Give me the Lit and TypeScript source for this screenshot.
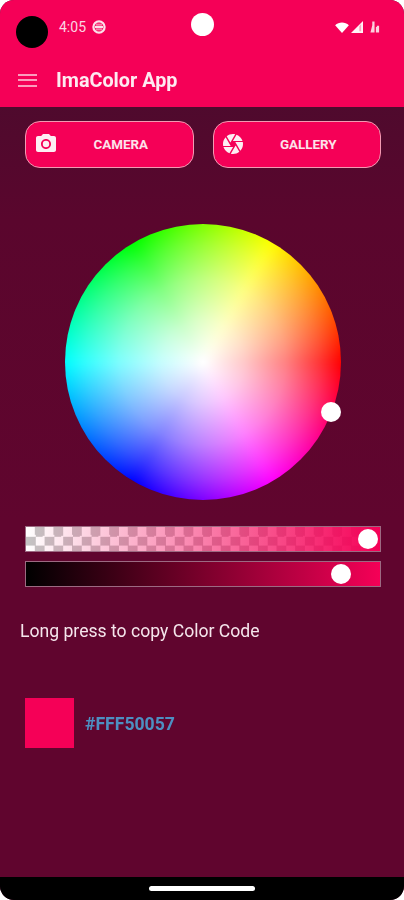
import { LitElement, html, css } from "lit";
import { customElement } from "lit/decorators.js";

@customElement("app-root")
export class AppRoot extends LitElement {
  static styles = css`
    :host { display: block; width: 404px; height: 900px; background: #fff; font-family: Roboto, "Liberation Sans", sans-serif; }
    .screen { position: relative; width: 404px; height: 900px; clip-path: inset(0 round 14px); display: flex; flex-direction: column; background: linear-gradient(#4f0a2d 107px, #5a062d 220px, #60052e 520px); }
    .content { display: flex; flex-direction: column; flex: 1; filter: blur(0.5px); }
    header { height: 107px; background: #f50057; display: flex; flex-direction: column; flex: none; }
    .status { height: 54px; display: flex; align-items: center; padding: 0 24px 0 59px; color: #fbd5e2; font-size: 14px; }
    .status .time { margin-right: 6px; }
    .status .right { margin-left: auto; display: flex; align-items: center; }
    .status .signal { margin: 0 7px 0 2px; }
    .cam { position: absolute; left: 16px; top: 16px; width: 32px; height: 32px; border-radius: 50%; background: #000; }
    .dot { position: absolute; left: 191px; top: 13px; width: 23px; height: 23px; border-radius: 50%; background: #fff; }
    .toolbar { height: 44px; margin-top: 4px; display: flex; align-items: center; padding-left: 18px; color: #fff; }
    .burger { width: 19px; display: flex; flex-direction: column; gap: 3.5px; margin-right: 19px; }
    .burger i { display: block; height: 2px; background: #fb9dbd; }
    .title { font-size: 19.8px; font-weight: 700; color: #fdeaf1; }
    .buttons { display: flex; gap: 19px; padding: 14px 23px 0 25px; }
    .btn { flex: 1; height: 47px; box-sizing: border-box; border: 1.5px solid #f29ab2; border-radius: 15px; background: #f50057; display: flex; align-items: center; position: relative; font-size: 13.4px; font-weight: 700; }
    .btn svg { position: absolute; left: 7.5px; top: 9.5px; }
    .btn span { flex: 1; text-align: center; color: #fde3ea; padding-left: 23px; }
    .wheelwrap { display: flex; justify-content: center; margin-top: 56px; padding-left: 2px; }
    .wheel { position: relative; width: 276px; height: 276px; }
    .disc { position: absolute; inset: 0; border-radius: 50%; overflow: hidden; }
    .hue { position: absolute; inset: -10px; background: conic-gradient(from 90deg, #f00, #f0f, #00f, #0ff, #0f0, #ff0, #f00); filter: blur(4px); }
    .white { position: absolute; inset: 0; background: radial-gradient(circle closest-side, #fff 0%, rgba(255,255,255,.78) 30%, rgba(255,255,255,.5) 60%, rgba(255,255,255,.2) 85%, rgba(255,255,255,0) 100%); }
    .knob { position: absolute; width: 20px; height: 20px; border-radius: 50%; background: #fff; }
    .wheel .knob { left: 256px; top: 178px; }
    .sliders { display: flex; flex-direction: column; gap: 9px; margin: 26px 23px 0 25px; }
    .slider { position: relative; height: 26px; box-sizing: border-box; border: 1.5px solid #9c6a82; }
    .alpha { background: linear-gradient(90deg, rgba(245,0,87,0) 0%, #f50057 100%), repeating-conic-gradient(#c4c4c4 0 25%, #fff 0 50%) 0 0 / 18.6px 18.6px; }
    .value { background: linear-gradient(90deg, #000, #f50057); }
    .alpha .knob { left: 331.5px; top: 1.5px; }
    .value .knob { left: 304.5px; top: 1.5px; }
    .hint { margin: 33px 0 0 20px; font-size: 17.6px; line-height: 22px; color: #f5e6ec; }
    .colorrow { display: flex; align-items: center; gap: 11px; margin: 56px 0 0 25px; }
    .swatch { width: 49px; height: 50px; background: #f50057; }
    .hex { font-size: 17.6px; font-weight: 700; color: #4d8fc2; margin-top: 2px; }
    .spacer { flex: 1; }
    .nav { height: 23px; background: #000; display: flex; justify-content: center; padding-top: 9px; box-sizing: border-box; flex: none; }
    .nav i { display: block; width: 106px; height: 5px; border-radius: 3px; background: #fff; }
  `;

  render() {
    return html`
      <div class="screen">
        <div class="content">
        <header>
          <div class="status">
            <span class="time">4:05</span>
            <svg width="14" height="14" viewBox="0 0 14 14"><circle cx="7" cy="7" r="5.6" fill="none" stroke="#fbe0e9" stroke-width="2.2"/><rect x="3" y="5.9" width="8" height="2.2" fill="#fbe0e9"/><rect x="4" y="3.6" width="6" height="2" fill="#fbe0e9" opacity=".55"/><rect x="4" y="8.4" width="6" height="2" fill="#fbe0e9" opacity=".55"/></svg>
            <div class="right">
              <svg width="14" height="11" viewBox="0 0 15 12"><path d="M0 3.5C4 -.6 11 -.6 15 3.5L7.5 12z" fill="#fff"/></svg>
              <svg class="signal" width="12" height="12" viewBox="0 0 13 13"><path d="M13 0V13H0z" fill="#fff" opacity=".95"/><path d="M9 6V11H11V3z" fill="#f8a5c0"/></svg>
              <svg width="10" height="14" viewBox="0 0 11 14"><path d="M0.5 13L2.5 5V1H5V13zM6.5 13V7H7.5V5.5H10V13z" fill="#fbd0de"/></svg>
            </div>
          </div>
          <div class="toolbar">
            <div class="burger"><i></i><i></i><i></i></div>
            <div class="title">ImaColor App</div>
          </div>
        </header>
        <div class="cam"></div>
        <div class="dot"></div>
        <div class="buttons">
          <div class="btn">
            <svg width="24" height="24" viewBox="0 0 24 24" fill="#fdeef3"><path d="M12 15.2a3.2 3.2 0 1 0 0-6.4 3.2 3.2 0 0 0 0 6.4z"/><path d="M9 2L7.17 4H4c-1.1 0-2 .9-2 2v12c0 1.1.9 2 2 2h16c1.1 0 2-.9 2-2V6c0-1.1-.9-2-2-2h-3.17L15 2H9zm3 15c-2.76 0-5-2.24-5-5s2.24-5 5-5 5 2.24 5 5-2.24 5-5 5z"/></svg>
            <span>CAMERA</span>
          </div>
          <div class="btn">
            <svg width="24" height="24" viewBox="0 0 24 24" fill="#fdeef3"><path d="M9.4 10.5l4.77-8.26C13.47 2.09 12.75 2 12 2c-2.4 0-4.6.85-6.32 2.25l3.66 6.35.06-.1zM21.54 9c-.92-2.92-3.15-5.26-6-6.34L11.88 9h9.66zm.26 1h-7.49l.29.5 4.76 8.25C21 16.97 22 14.61 22 12c0-.69-.07-1.35-.2-2zM8.54 12l-3.9-6.75C3.01 7.03 2 9.39 2 12c0 .69.07 1.35.2 2h7.49l-1.15-2zm-6.08 3c.92 2.92 3.15 5.26 6 6.34L12.12 15H2.46zm11.27 0l-3.9 6.76c.7.15 1.42.24 2.17.24 2.4 0 4.6-.85 6.32-2.25l-3.66-6.35-.93 1.6z"/></svg>
            <span>GALLERY</span>
          </div>
        </div>
        <div class="wheelwrap"><div class="wheel"><div class="disc"><div class="hue"></div><div class="white"></div></div><div class="knob"></div></div></div>
        <div class="sliders">
          <div class="slider alpha"><div class="knob"></div></div>
          <div class="slider value"><div class="knob"></div></div>
        </div>
        <div class="hint">Long press to copy Color Code</div>
        <div class="colorrow"><div class="swatch"></div><div class="hex">#FFF50057</div></div>
        <div class="spacer"></div>
        <div class="nav"><i></i></div>
        </div>
      </div>
    `;
  }
}
